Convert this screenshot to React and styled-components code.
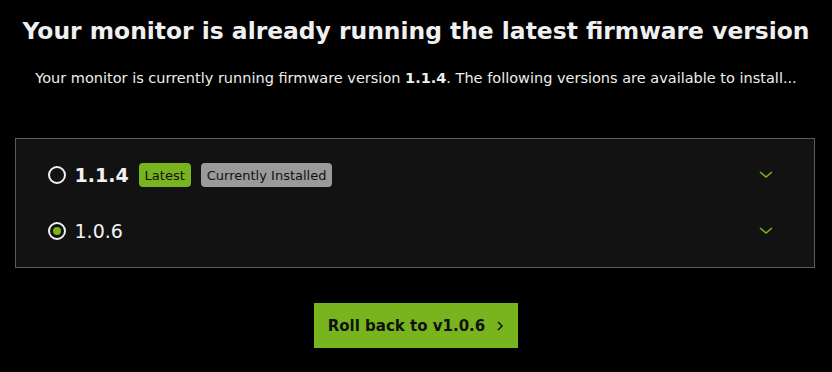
import React, { useState } from 'react'
import styled, { createGlobalStyle } from 'styled-components'

const Global = createGlobalStyle`
  html, body {
    margin: 0;
    background: #000;
    font-family: "DejaVu Sans", "Noto Sans", sans-serif;
    color: #eee;
  }
`

const Page = styled.div`
  width: 832px;
  height: 372px;
  background: #000;
  display: flex;
  flex-direction: column;
  align-items: center;
  padding-top: 14px;
  box-sizing: border-box;
`

const Title = styled.h1`
  margin: 0;
  font-size: 23.4px;
  font-weight: 700;
  color: #f0f0f0;
  line-height: 34px;
`

const Subtitle = styled.p`
  margin: 20px 0 0;
  font-size: 14.5px;
  line-height: 20px;
  color: #eee;
  b {
    font-weight: 700;
  }
`

const Panel = styled.div`
  width: 800px;
  margin-top: 50px;
  margin-right: 3px;
  box-sizing: border-box;
  background: #121212;
  border: 1px solid #5c5c5c;
  padding: 8px 0;
`

const Row = styled.div`
  display: flex;
  align-items: center;
  height: 56px;
  padding: 0 40px 0 32px;
  cursor: pointer;
`

const Radio = styled.span`
  width: 14px;
  height: 14px;
  border: 2px solid #f0f0f0;
  border-radius: 50%;
  display: flex;
  align-items: center;
  justify-content: center;
  flex-shrink: 0;
  &::after {
    content: '';
    width: 8px;
    height: 8px;
    border-radius: 50%;
    background: ${p => (p.$checked ? '#78b41e' : 'transparent')};
  }
`

const Version = styled.span`
  margin-left: 9px;
  font-size: 19px;
  font-weight: ${p => (p.$bold ? 700 : 400)};
  color: #f2f2f2;
`

const Badge = styled.span`
  margin-left: 10px;
  height: 24px;
  padding: 0 6px;
  border-radius: 4px;
  display: inline-flex;
  align-items: center;
  font-size: 13px;
  color: #111;
  background: ${p => p.$bg};
`

const Chevron = styled.svg`
  margin-left: auto;
  width: 16px;
  height: 10px;
`

const Button = styled.button`
  margin-top: 35px;
  height: 45px;
  padding: 0 14px 0 14px;
  border: none;
  background: #78b41e;
  color: #111;
  font-family: inherit;
  font-size: 15px;
  font-weight: 700;
  display: flex;
  align-items: center;
  gap: 11px;
  cursor: pointer;
`

const versions = [
  { id: '1.1.4', bold: true, badges: true },
  { id: '1.0.6', bold: false, badges: false },
]

export default function App() {
  const [selected, setSelected] = useState('1.0.6')
  return (
    <Page>
      <Global />
      <Title>Your monitor is already running the latest firmware version</Title>
      <Subtitle>
        Your monitor is currently running firmware version <b>1.1.4</b>. The following versions are available to install...
      </Subtitle>
      <Panel>
        {versions.map(v => (
          <Row key={v.id} onClick={() => setSelected(v.id)}>
            <Radio $checked={selected === v.id} />
            <Version $bold={v.bold}>{v.id}</Version>
            {v.badges && (
              <>
                <Badge $bg="#78b41e">Latest</Badge>
                <Badge $bg="#9a9a9a">Currently Installed</Badge>
              </>
            )}
            <Chevron viewBox="0 0 16 10">
              <path d="M2 2 L8 7 L14 2" fill="none" stroke="#78b41e" strokeWidth="1.6" />
            </Chevron>
          </Row>
        ))}
      </Panel>
      <Button>
        Roll back to v1.0.6
        <svg width="8" height="12" viewBox="0 0 8 12">
          <path d="M2 2 L6 6 L2 10" fill="none" stroke="#111" strokeWidth="1.5" />
        </svg>
      </Button>
    </Page>
  )
}
